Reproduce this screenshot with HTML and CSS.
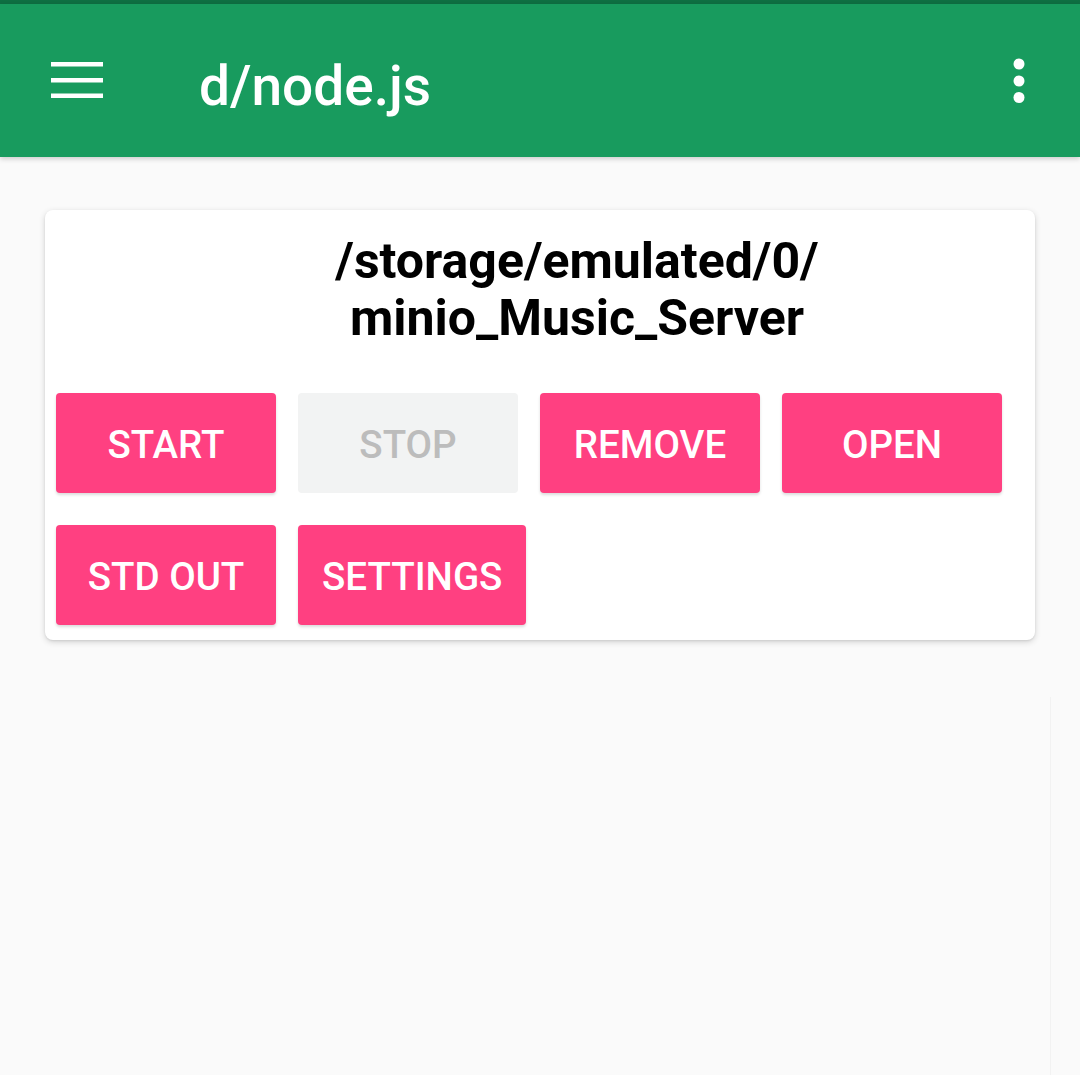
FILE: index.html
```html
<!DOCTYPE html>
<html>
<head>
<meta charset="utf-8">
<link rel="stylesheet" href="styles.css">
</head>
<body>
<div class="statusbar"></div>
<header class="appbar">
  <div class="menu-btn">
    <svg width="52" height="36" viewBox="0 0 52 36"><rect x="0" y="0" width="52" height="4.5" fill="#fff"/><rect x="0" y="16" width="52" height="4.5" fill="#fff"/><rect x="0" y="31.5" width="52" height="4.5" fill="#fff"/></svg>
  </div>
  <h1 class="title">d/node.js</h1>
  <div class="more-btn">
    <svg width="12" height="46" viewBox="0 0 12 46"><circle cx="6" cy="6" r="5.5" fill="#fff"/><circle cx="6" cy="23" r="5.5" fill="#fff"/><circle cx="6" cy="39.5" r="5.5" fill="#fff"/></svg>
  </div>
</header>
<main class="content">
  <section class="card">
    <div class="card-title">/storage/emulated/0/<br>minio_Music_Server</div>
    <div class="buttons">
      <button class="btn">START</button>
      <button class="btn disabled">STOP</button>
      <button class="btn">REMOVE</button>
      <button class="btn">OPEN</button>
      <button class="btn">STD OUT</button>
      <button class="btn">SETTINGS</button>
    </div>
  </section>
</main>
<div class="edge"></div>
</body>
</html>
```
FILE: styles.css
```css
html, body {
  margin: 0;
  padding: 0;
  background: #fafafa;
  font-family: Roboto, "Noto Sans", sans-serif;
  width: 1080px;
  height: 1075px;
  overflow: hidden;
  position: relative;
}
.statusbar {
  height: 4px;
  background: #0e6f42;
}
.appbar {
  height: 153px;
  background: #189b5e;
  display: flex;
  align-items: center;
  box-shadow: 0 2px 5px rgba(0,0,0,0.18);
  position: relative;
  z-index: 1;
}
.menu-btn {
  width: 52px;
  height: 36px;
  margin-left: 51px;
  margin-top: -1px;
}
.menu-btn svg, .more-btn svg { display: block; }
.title {
  margin: 11px 0 0 96px;
  font-size: 55px;
  font-weight: 500;
  color: #fff;
  flex: 1;
}
.more-btn {
  width: 12px;
  height: 46px;
  margin-right: 55px;
  margin-top: 0;
}
.content {
  padding: 53px 45px 0 45px;
}
.card {
  background: #fff;
  border-radius: 8px;
  box-shadow: 0 2px 6px rgba(0,0,0,0.16), 0 1px 2px rgba(0,0,0,0.08);
  padding: 23px 11px 15px 11px;
}
.card-title {
  font-size: 50px;
  font-weight: 700;
  color: #000;
  text-align: center;
  line-height: 57px;
  padding-left: 74px;
}
.buttons {
  display: flex;
  flex-wrap: wrap;
  gap: 32px 22px;
  margin-top: 46px;
  width: 950px;
}
.btn {
  min-width: 220px;
  height: 100px;
  padding: 0 24px;
  border: none;
  border-radius: 4px;
  background: #ff4081;
  color: #fff;
  font-family: Roboto, sans-serif;
  font-size: 38.5px;
  font-weight: 500;
  padding-top: 2px;
  box-shadow: 0 2px 3px rgba(0,0,0,0.14);
}
.btn.disabled {
  background: #f2f3f3;
  color: #bcbcbc;
  box-shadow: none;
}
.edge {
  position: absolute;
  left: 1050px;
  top: 697px;
  width: 30px;
  bottom: 0;
  border-left: 1px solid #f2f2f2;
  background: #fafafa;
}
```
